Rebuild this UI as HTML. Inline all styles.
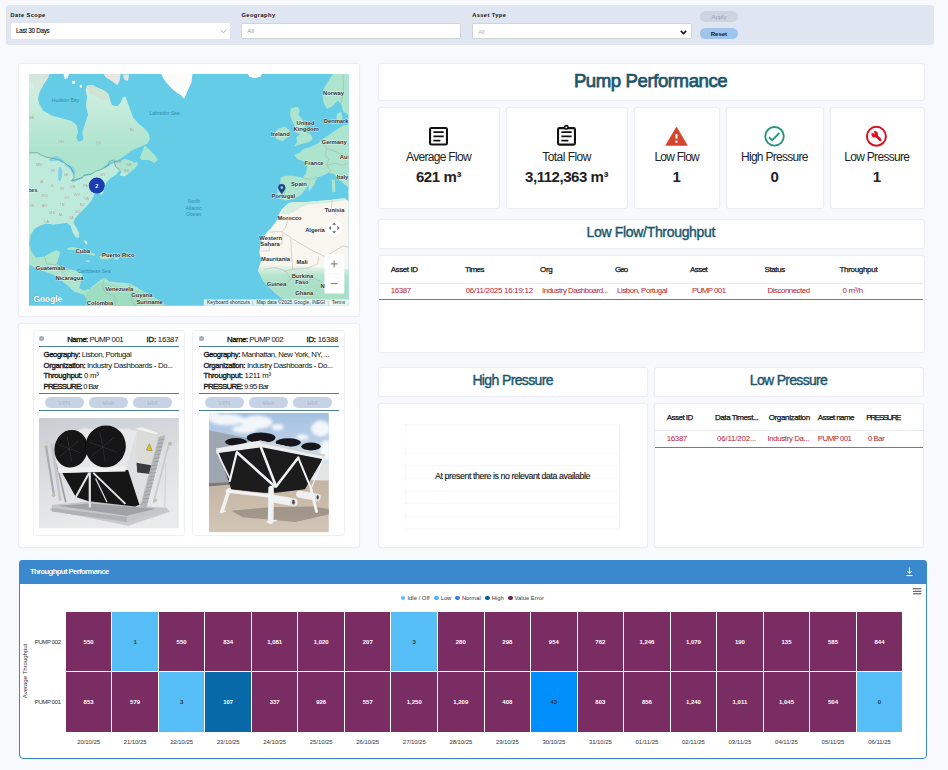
<!DOCTYPE html>
<html lang="en"><head><meta charset="utf-8"><title>Pump Performance</title>
<style>
html,body{margin:0;padding:0;}
body{width:948px;height:770px;overflow:hidden;background:#f8f9fd;font-family:"Liberation Sans",sans-serif;}
#root{position:relative;width:948px;height:770px;overflow:hidden;}
.p{position:absolute;background:#fff;border-radius:2.5px;box-shadow:0 0 0 1.2px #eceef4;box-sizing:border-box;}
.b{position:absolute;box-sizing:border-box;}
.t{position:absolute;white-space:pre;}
svg{position:absolute;overflow:visible;}
.t b{font-weight:400;-webkit-text-stroke:0.32px currentColor;}

</style></head>
<body>
<div id="root">
<div class="b" style="left:5.5px;top:5px;width:928.0px;height:39.5px;background:#dfe5f1;border-radius:3px;box-shadow:none;"></div>
<span class="t" style="left:10.60px;top:11.70px;font-size:5.7px;line-height:7.41px;color:#111;font-weight:700;letter-spacing:0.402px;">Date Scope</span>
<div class="b" style="left:10.6px;top:23.3px;width:219.4px;height:16.0px;background:#fff;border-radius:1.5px;"></div>
<span class="t" style="left:16.00px;top:27.01px;font-size:6.3px;line-height:8.19px;color:#000;letter-spacing:-0.280px;-webkit-text-stroke:0.08px #000;">Last 30 Days</span>
<svg style="left:219.5px;top:28.5px" width="7" height="5" viewBox="0 0 7 5"><path d="M0.8 0.9 L3.5 3.8 L6.2 0.9" fill="none" stroke="#9a9a9a" stroke-width="0.8"/></svg>
<span class="t" style="left:241.40px;top:11.70px;font-size:5.7px;line-height:7.41px;color:#111;font-weight:700;letter-spacing:0.463px;">Geography</span>
<div class="b" style="left:241.4px;top:23.3px;width:219.8px;height:16.2px;background:#fff;border:1px solid #cfd3da;border-radius:1.5px;"></div>
<span class="t" style="left:247.20px;top:28.10px;font-size:6px;line-height:7.8px;color:#9a9a9a;letter-spacing:0.043px;">All</span>
<span class="t" style="left:472.20px;top:11.70px;font-size:5.7px;line-height:7.41px;color:#111;font-weight:700;letter-spacing:0.416px;">Asset Type</span>
<div class="b" style="left:472.2px;top:23.3px;width:220.3px;height:16.2px;background:#fff;border:1px solid #cfd3da;border-radius:1.5px;"></div>
<span class="t" style="left:478.20px;top:28.60px;font-size:6px;line-height:7.8px;color:#b5b5b5;letter-spacing:-0.091px;">All</span>
<svg style="left:679.5px;top:29.5px" width="7" height="5" viewBox="0 0 7 5"><path d="M0.8 0.9 L3.5 3.6 L6.2 0.9" fill="none" stroke="#111" stroke-width="1.5"/></svg>
<div class="b" style="left:700px;top:11.4px;width:37.6px;height:10.4px;background:#ccd4e0;border-radius:6px;"></div>
<span class="t" style="left:711.39px;top:13.70px;font-size:6px;line-height:7.8px;color:#9aa4b2;">Apply</span>
<div class="b" style="left:700px;top:28px;width:37.6px;height:10.9px;background:#9fc5ec;border-radius:6px;"></div>
<span class="t" style="left:710.73px;top:30.50px;font-size:6px;line-height:7.8px;color:#0a1730;font-weight:700;">Reset</span>
<div class="p" style="left:19.3px;top:63.8px;width:339.7px;height:252.2px;"></div>
<svg style="left:29px;top:74px" width="319.6" height="231.7" viewBox="29 74 319.6 231.7">
<defs><clipPath id="mc"><rect x="29" y="74" width="319.6" height="231.7"/></clipPath><filter id="bl" x="-5%" y="-5%" width="110%" height="110%"><feGaussianBlur stdDeviation="0.5"/></filter></defs>
<g clip-path="url(#mc)">
<rect x="29" y="74" width="320" height="232" fill="#64cce7"/>
<g filter="url(#bl)">
<path d="M26.8 71.8 L50.1 71.8 L48.0 78.1 L42.9 85.2 L39.3 92.4 L37.9 99.6 L39.7 105.0 L42.9 110.4 L51.9 115.7 L62.7 118.4 L71.6 121.1 L77.0 125.6 L77.9 132.8 L76.1 137.3 L78.8 142.1 L83.3 139.6 L82.4 131.9 L85.1 123.8 L88.1 114.8 L86.0 105.9 L87.2 96.9 L85.6 89.7 L86.9 85.8 L92.3 84.9 L96.7 87.6 L103.9 90.3 L108.4 94.2 L110.2 100.5 L112.0 105.2 L117.4 106.2 L120.9 102.6 L122.7 97.8 L125.4 96.5 L128.1 104.1 L130.8 111.2 L133.0 117.5 L138.0 122.9 L144.3 128.3 L148.7 133.7 L150.0 139.0 L147.3 143.5 L141.6 146.2 L136.2 148.4 L129.9 151.6 L125.1 155.7 L122.7 158.2 L128.1 159.7 L132.6 161.5 L136.5 164.2 L134.8 168.6 L129.9 172.6 L124.5 176.2 L120.1 175.5 L121.8 170.8 L119.2 170.4 L115.6 174.9 L111.1 177.6 L107.1 181.2 L104.8 185.7 L103.6 192.0 L101.2 195.5 L97.6 186.8 L94.0 194.9 L91.0 201.1 L86.3 206.5 L82.4 210.5 L78.3 214.6 L74.9 218.2 L73.1 222.7 L76.5 228.0 L79.2 233.4 L78.3 238.3 L75.6 237.4 L72.7 232.0 L70.7 225.7 L67.1 222.7 L60.9 223.6 L53.7 224.5 L46.5 223.6 L39.3 225.7 L34.0 229.3 L30.7 235.6 L29.3 244.2 L31.3 251.4 L35.8 257.6 L44.7 256.4 L50.5 252.8 L56.7 250.1 L60.3 252.3 L58.5 258.5 L56.7 263.9 L60.9 266.6 L69.8 269.3 L78.8 271.6 L82.7 274.7 L81.0 281.8 L79.2 288.1 L84.2 290.8 L88.1 288.7 L91.7 290.8 L89.9 288.1 L94.9 284.5 L100.3 280.1 L104.8 277.9 L109.3 281.5 L118.3 282.4 L129.0 283.3 L136.2 286.9 L143.4 291.3 L150.5 294.9 L157.7 299.4 L164.0 303.4 L166.7 308.7 L86.0 308.7 L86.9 299.8 L84.2 294.8 L78.8 293.0 L73.4 291.2 L68.0 285.8 L60.9 280.4 L53.7 275.0 L44.7 271.4 L35.8 267.9 L26.8 263.9 Z" fill="#ade4ce" />
<clipPath id="nac"><path d="M26.8 71.8 L50.1 71.8 L48.0 78.1 L42.9 85.2 L39.3 92.4 L37.9 99.6 L39.7 105.0 L42.9 110.4 L51.9 115.7 L62.7 118.4 L71.6 121.1 L77.0 125.6 L77.9 132.8 L76.1 137.3 L78.8 142.1 L83.3 139.6 L82.4 131.9 L85.1 123.8 L88.1 114.8 L86.0 105.9 L87.2 96.9 L85.6 89.7 L86.9 85.8 L92.3 84.9 L96.7 87.6 L103.9 90.3 L108.4 94.2 L110.2 100.5 L112.0 105.2 L117.4 106.2 L120.9 102.6 L122.7 97.8 L125.4 96.5 L128.1 104.1 L130.8 111.2 L133.0 117.5 L138.0 122.9 L144.3 128.3 L148.7 133.7 L150.0 139.0 L147.3 143.5 L141.6 146.2 L136.2 148.4 L129.9 151.6 L125.1 155.7 L122.7 158.2 L128.1 159.7 L132.6 161.5 L136.5 164.2 L134.8 168.6 L129.9 172.6 L124.5 176.2 L120.1 175.5 L121.8 170.8 L119.2 170.4 L115.6 174.9 L111.1 177.6 L107.1 181.2 L104.8 185.7 L103.6 192.0 L101.2 195.5 L97.6 186.8 L94.0 194.9 L91.0 201.1 L86.3 206.5 L82.4 210.5 L78.3 214.6 L74.9 218.2 L73.1 222.7 L76.5 228.0 L79.2 233.4 L78.3 238.3 L75.6 237.4 L72.7 232.0 L70.7 225.7 L67.1 222.7 L60.9 223.6 L53.7 224.5 L46.5 223.6 L39.3 225.7 L34.0 229.3 L30.7 235.6 L29.3 244.2 L31.3 251.4 L35.8 257.6 L44.7 256.4 L50.5 252.8 L56.7 250.1 L60.3 252.3 L58.5 258.5 L56.7 263.9 L60.9 266.6 L69.8 269.3 L78.8 271.6 L82.7 274.7 L81.0 281.8 L79.2 288.1 L84.2 290.8 L88.1 288.7 L91.7 290.8 L89.9 288.1 L94.9 284.5 L100.3 280.1 L104.8 277.9 L109.3 281.5 L118.3 282.4 L129.0 283.3 L136.2 286.9 L143.4 291.3 L150.5 294.9 L157.7 299.4 L164.0 303.4 L166.7 308.7 L86.0 308.7 L86.9 299.8 L84.2 294.8 L78.8 293.0 L73.4 291.2 L68.0 285.8 L60.9 280.4 L53.7 275.0 L44.7 271.4 L35.8 267.9 L26.8 263.9 Z" fill="#000" /></clipPath>
<g clip-path="url(#nac)"><path d="M26.9 153.1 L37.3 152.6 L40.4 154.7 L46.7 157.3 L53.9 158.5 L60.2 160.4 L64.8 163.0 L70.6 167.1 L73.7 172.9 L74.2 177.5 L71.6 180.6 L77.8 179.1 L83.0 177.2 L83.5 175.5 L91.3 174.1 L95.5 171.3 L101.7 169.2 L108.0 165.6 L109.3 161.5 L113.8 159.7 L115.6 166.8 L120.1 170.4 L125.4 170.4 L150.5 195.5 L26.8 195.5 L26.8 186.8 L150.5 186.8 L150.5 238.8 L84.2 240.6 L60.9 228.0 L46.5 227.1 L35.8 229.8 L30.4 233.4 L26.8 235.2 L20 200 L20 150 Z" fill="#bdeadb" /></g>
<linearGradient id="ng" gradientUnits="userSpaceOnUse" x1="0" y1="74" x2="0" y2="150"><stop offset="0" stop-color="#e6f5ee" stop-opacity="0.75"/><stop offset="1" stop-color="#e6f5ee" stop-opacity="0"/></linearGradient>
<g clip-path="url(#nac)"><rect x="29" y="74" width="200" height="80" fill="url(#ng)"/></g>
<g clip-path="url(#nac)"><path d="M86.0 292.6 L100.3 281.8 L118.3 285.4 L139.8 290.8 L166.7 301.6 L166.7 310.5 L84.2 310.5 Z" fill="#9fddc0" /></g>
<path d="M26.8 71.8 L50.1 71.8 L48.0 78.1 L42.9 85.2 L39.3 92.4 L35.8 89.7 L32.2 82.6 L26.8 80.8 Z" fill="#d5e6dc" />
<path d="M86.9 85.8 L92.3 84.9 L96.7 87.6 L103.9 90.3 L108.4 94.2 L109.3 99.6 L102.1 100.5 L96.7 96.9 L89.6 93.3 Z" fill="#cfe3d2" />
<path d="M63.6 73.9 L68.9 73.9 L67.7 78.1 L64.8 79.0 Z" fill="#fbfbfa" />
<path d="M72.0 81.1 L74.9 80.8 L75.2 83.5 L72.5 84.0 Z" fill="#fbfbfa" />
<path d="M79.7 85.2 L82.0 84.9 L82.0 87.6 L79.9 87.6 Z" fill="#fbfbfa" />
<path d="M102.1 71.8 L120.9 71.8 L119.7 80.8 L117.4 85.2 L113.8 82.6 L110.2 79.9 L105.7 77.2 Z" fill="#e8e6e0" />
<path d="M122.7 74.5 L129.0 74.5 L128.1 80.8 L124.5 79.9 Z" fill="#e8e6e0" />
<path d="M160.4 71.8 L192.7 71.8 L191.4 82.6 L187.3 91.5 L184.1 99.1 L181.4 95.5 L176.9 92.8 L171.5 88.3 L166.7 82.9 L162.7 77.5 Z" fill="#fbfbfa" />
<path d="M139.8 157.9 L144.8 145.3 L148.7 148.9 L154.1 154.3 L158.1 159.7 L154.5 162.7 L148.7 160.0 L141.9 160.0 Z" fill="#ade4ce" />
<path d="M125.4 167.7 L132.6 163.3 L137.1 161.8 L138.0 165.1 L132.6 169.5 L126.3 173.1 L122.7 173.1 Z" fill="#ade4ce" />
<path d="M48.2 159.9 L52.9 157.3 L57.1 155.7 L60.2 157.8 L63.3 160.4 L64.8 162.5 L62.2 163.0 L59.1 160.9 L55.5 160.4 L51.3 161.4 Z" fill="#7fd3ea" />
<path d="M58.6 167.7 L60.7 166.6 L62.2 170.8 L62.0 177.0 L60.2 181.2 L58.3 179.6 L58.1 172.9 Z" fill="#7fd3ea" />
<path d="M64.3 163.5 L68.5 164.5 L72.6 167.1 L75.2 170.8 L74.7 174.4 L72.1 173.4 L70.6 169.7 L67.4 167.1 L64.8 165.6 Z" fill="#7fd3ea" />
<path d="M71.6 180.6 L75.8 179.1 L80.9 177.5 L83.5 176.5 L83.0 178.1 L78.9 180.1 L74.7 181.7 L72.1 182.2 Z" fill="#7fd3ea" />
<path d="M83.0 174.9 L87.2 173.7 L91.3 173.4 L91.3 174.7 L87.2 175.8 L83.5 176.2 Z" fill="#7fd3ea" />
<path d="M125.1 155.7 L118.3 159.7 L111.1 161.8 L103.9 166.8 L104.8 168.3 L112.0 163.6 L119.2 161.5 L125.4 158.2 Z" fill="#64cce7" />
<path d="M67.1 248.1 L73.4 246.9 L80.6 248.7 L87.8 251.4 L95.3 254.0 L94.2 256.0 L87.8 254.2 L80.6 251.5 L73.4 250.1 L68.0 249.7 Z" fill="#ade4ce" />
<path d="M99.4 256.0 L109.3 255.7 L111.4 258.5 L105.7 259.6 L100.3 259.1 Z" fill="#ade4ce" />
<path d="M114.3 257.8 L118.6 257.8 L118.6 259.6 L114.3 259.6 Z" fill="#ade4ce" />
<path d="M85.6 260.3 L89.9 260.5 L89.6 262.1 L86.0 261.9 Z" fill="#ade4ce" />
<path d="M83.8 240.2 L86.7 241.0 L87.4 244.5 L85.3 243.8 Z" fill="#d8efe6" />
<path d="M246.9 71.8 L263.0 71.8 L260.7 76.8 L254.0 78.2 L249.2 76.5 Z" fill="#fbfbfa" />
<path d="M334.2 71.8 L351.8 71.8 L351.8 115.7 L348.6 115.2 L343.2 111.6 L341.4 104.4 L337.8 100.8 L332.4 106.2 L327.0 108.9 L323.5 102.6 L322.4 95.1 L324.2 87.9 L328.5 80.8 Z" fill="#ade4ce" />
<path d="M337.1 113.4 L341.4 112.1 L342.5 118.8 L339.2 122.4 L336.4 118.4 Z" fill="#ade4ce" />
<path d="M290.8 108.6 L297.4 106.8 L300.1 110.4 L298.3 114.8 L301.9 118.8 L304.8 124.7 L304.1 131.0 L310.9 134.6 L312.7 139.2 L309.1 142.1 L301.6 143.9 L294.0 146.6 L297.3 141.7 L296.2 137.4 L300.0 134.6 L295.5 131.9 L294.6 125.6 L291.9 120.2 L289.9 113.9 Z" fill="#ade4ce" />
<path d="M277.4 129.2 L284.5 126.5 L289.4 130.1 L288.5 136.4 L282.7 141.0 L276.5 139.2 L274.7 133.7 Z" fill="#ade4ce" />
<path d="M351.8 123.8 L343.2 125.6 L337.4 129.2 L332.1 132.8 L326.7 136.4 L321.3 139.9 L317.7 143.5 L310.5 147.1 L303.4 148.9 L299.8 152.5 L294.0 155.2 L297.1 158.8 L303.4 161.5 L307.3 166.8 L305.5 174.0 L302.5 177.6 L292.6 175.8 L285.4 175.8 L280.6 177.6 L280.1 184.8 L278.6 193.7 L278.3 185.0 L277.2 192.2 L279.2 198.6 L285.4 200.4 L292.6 199.3 L299.8 195.8 L304.6 190.4 L308.7 185.0 L308.7 192.0 L314.1 184.8 L317.2 177.6 L323.1 175.5 L328.5 173.1 L333.9 174.0 L339.2 179.4 L344.6 184.8 L351.8 189.3 Z" fill="#ade4ce" />
<path d="M331.7 179.4 L334.9 179.8 L335.3 192.0 L332.4 192.3 Z" fill="#ade4ce" />
<path d="M288.5 202.9 L296.2 202.0 L307.0 202.0 L317.7 201.1 L328.5 200.2 L337.4 199.0 L345.0 198.3 L351.8 204.7 L351.8 310.5 L326.7 310.5 L324.9 299.8 L317.7 300.7 L307.0 302.5 L296.2 303.4 L289.0 301.6 L281.8 298.0 L274.7 292.6 L269.3 287.2 L263.9 281.8 L261.2 276.5 L258.2 271.1 L259.4 265.7 L261.4 260.3 L259.4 253.1 L260.3 246.0 L262.1 238.8 L265.7 233.4 L271.1 228.0 L276.5 220.9 L278.3 215.5 L281.8 209.2 Z" fill="#f8f6ef" />
<linearGradient id="sg" gradientUnits="userSpaceOnUse" x1="0" y1="264" x2="0" y2="284"><stop offset="0" stop-color="#b7e6cf" stop-opacity="0"/><stop offset="0.55" stop-color="#b7e6cf" stop-opacity="1"/><stop offset="1" stop-color="#a9e0c6"/></linearGradient>
<clipPath id="afc"><path d="M288.5 202.9 L296.2 202.0 L307.0 202.0 L317.7 201.1 L328.5 200.2 L337.4 199.0 L345.0 198.3 L351.8 204.7 L351.8 310.5 L326.7 310.5 L324.9 299.8 L317.7 300.7 L307.0 302.5 L296.2 303.4 L289.0 301.6 L281.8 298.0 L274.7 292.6 L269.3 287.2 L263.9 281.8 L261.2 276.5 L258.2 271.1 L259.4 265.7 L261.4 260.3 L259.4 253.1 L260.3 246.0 L262.1 238.8 L265.7 233.4 L271.1 228.0 L276.5 220.9 L278.3 215.5 L281.8 209.2 Z" fill="#000" /></clipPath>
<g clip-path="url(#afc)"><path d="M253.1 263.9 L351.8 269.3 L351.8 310.5 L253.1 310.5 Z" fill="url(#sg)" /></g>
<path d="M288.5 202.9 L296.2 202.0 L307.0 202.0 L317.7 201.1 L328.5 200.2 L337.4 199.0 L345.0 198.3 L346.4 200.2 L337.4 201.5 L328.5 202.6 L317.7 203.7 L308.7 204.4 L301.6 206.9 L294.4 211.9 L288.1 214.6 L280.9 213.7 L282.7 209.2 Z" fill="#d6eedd" />
</g>
<path d="M26.9 153.1 L37.3 152.6 L40.4 154.7 L46.7 157.3 L53.9 158.5 L60.2 160.4 L64.8 163.0 L70.6 167.1 L73.7 172.9 L74.2 177.5 L71.6 180.6 L77.8 179.1 L83.0 177.2 L83.5 175.5 L91.3 174.1 L95.5 171.3 L101.7 169.2 L108.0 165.6 L109.3 161.5 L113.8 159.7 L115.6 166.8 L120.1 170.4" fill="none" stroke="#5f9a90" stroke-width="0.7" fill="none"/>
<path d="M288.1 219.1 L285.4 228.0 L281.8 231.6 L269.3 232.0" fill="none" stroke="#9aa39a" stroke-width="0.5" fill="none" opacity="0.8"/>
<path d="M281.8 231.6 L292.6 238.8 L310.5 249.6 L324.9 256.7 L342.8 246.0 L348.6 246.9" fill="none" stroke="#9aa39a" stroke-width="0.5" fill="none" opacity="0.8"/>
<path d="M261.2 251.0 L269.3 251.0 L269.3 244.2 L281.8 244.2 L282.7 233.4" fill="none" stroke="#9aa39a" stroke-width="0.5" fill="none" opacity="0.8"/>
<path d="M290.8 238.8 L291.7 256.7 L292.6 269.3 L285.4 271.1" fill="none" stroke="#9aa39a" stroke-width="0.5" fill="none" opacity="0.8"/>
<path d="M292.6 269.3 L307.0 268.4 L317.7 263.9 L318.6 256.7" fill="none" stroke="#9aa39a" stroke-width="0.5" fill="none" opacity="0.8"/>
<path d="M332.1 200.2 L331.2 208.3 L337.4 215.5" fill="none" stroke="#9aa39a" stroke-width="0.5" fill="none" opacity="0.8"/>
<path d="M263.9 269.3 L274.7 267.5 L285.4 271.1 L290.8 278.3 L285.4 285.4" fill="none" stroke="#9aa39a" stroke-width="0.5" fill="none" opacity="0.8"/>
<path d="M290.8 278.3 L303.4 281.8 L314.1 278.3 L321.3 281.8" fill="none" stroke="#9aa39a" stroke-width="0.5" fill="none" opacity="0.8"/>
<path d="M302.5 177.6 L310.5 179.4 L317.2 177.6" fill="none" stroke="#9aa39a" stroke-width="0.5" fill="none" opacity="0.8"/>
<path d="M285.4 188.6 L284.5 195.8 L281.8 199.0" fill="none" stroke="#9aa39a" stroke-width="0.5" fill="none" opacity="0.8"/>
<path d="M321.3 139.9 L324.0 145.3 L326.7 148.9 L324.9 154.3 L328.5 159.7 L326.7 165.1 L330.3 170.4 L328.5 173.1" fill="none" stroke="#9aa39a" stroke-width="0.5" fill="none" opacity="0.8"/>
<path d="M326.7 148.9 L333.9 150.7 L341.0 154.3 L348.6 156.1" fill="none" stroke="#9aa39a" stroke-width="0.5" fill="none" opacity="0.8"/>
<path d="M326.7 165.1 L335.6 163.3 L342.8 165.1 L348.6 163.3" fill="none" stroke="#9aa39a" stroke-width="0.5" fill="none" opacity="0.8"/>
<path d="M342.8 74.5 L343.7 87.9 L341.0 104.1" fill="none" stroke="#9aa39a" stroke-width="0.5" fill="none" opacity="0.8"/>
<path d="M104.8 278.3 L102.1 285.4 L105.7 292.6 L114.7 296.2 L115.6 305.5" fill="none" stroke="#9aa39a" stroke-width="0.5" fill="none" opacity="0.8"/>
<path d="M129.0 283.6 L132.6 290.8 L130.8 299.8 L136.2 305.5" fill="none" stroke="#9aa39a" stroke-width="0.5" fill="none" opacity="0.8"/>
<path d="M143.4 291.7 L145.2 299.8 L148.7 305.5" fill="none" stroke="#9aa39a" stroke-width="0.5" fill="none" opacity="0.8"/>
<path d="M44.7 256.7 L46.5 263.9 L55.5 264.8 L56.4 263.9" fill="none" stroke="#9aa39a" stroke-width="0.5" fill="none" opacity="0.8"/>
<path d="M55.5 264.8 L60.9 271.1 L69.8 269.3" fill="none" stroke="#9aa39a" stroke-width="0.5" fill="none" opacity="0.8"/>
<path d="M60.9 271.1 L68.0 278.3 L81.0 281.8" fill="none" stroke="#9aa39a" stroke-width="0.5" fill="none" opacity="0.8"/>
<circle cx="334.2" cy="228" r="8.2" fill="#fff"/>
<g fill="#666"><path d="M334.2 222.6 l2 2.2 h-4 z"/><path d="M334.2 233.4 l2 -2.2 h-4 z"/><path d="M328.8 228 l2.2 -2 v4 z"/><path d="M339.6 228 l-2.2 -2 v4 z"/></g>
<rect x="324.5" y="254" width="19.8" height="39.5" rx="1.5" fill="#fff"/>
<path d="M330.8 263.9 H337.6 M334.2 260.5 V267.3 M330.8 283.6 H337.6" stroke="#666" stroke-width="0.9" fill="none"/>
<rect x="328.5" y="273.6" width="11.8" height="0.4" fill="#e6e6e6"/>
<rect x="203.8" y="299.4" width="146" height="7" fill="#fff" opacity="0.75"/>
<g font-family="Liberation Sans, sans-serif" font-size="5" fill="#333">
<text x="206.9" y="304.3" textLength="43" lengthAdjust="spacingAndGlyphs">Keyboard shortcuts</text>
<text x="256.4" y="304.3" textLength="68.8" lengthAdjust="spacingAndGlyphs">Map data ©2025 Google, INEGI</text>
<text x="331.7" y="304.3" textLength="13.5" lengthAdjust="spacingAndGlyphs">Terms</text>
</g>
<path d="M252.8 300.5 V305 M328.3 300.5 V305" stroke="#999" stroke-width="0.4"/>
<text x="33.6" y="302" font-family="Liberation Sans, sans-serif" font-size="9.5" font-weight="700" fill="#fff" stroke="#7a8a8a" stroke-width="0.5" paint-order="stroke" textLength="28.5" lengthAdjust="spacingAndGlyphs">Google</text>
<text x="333.5" y="94.9" text-anchor="middle" font-family="Liberation Sans, sans-serif" font-size="5.8" font-weight="700" fill="#303030" stroke="#fff" stroke-width="0.8" paint-order="stroke" stroke-opacity="0.7">Norway</text>
<text x="336.2" y="122.9" text-anchor="middle" font-family="Liberation Sans, sans-serif" font-size="5.8" font-weight="700" fill="#303030" stroke="#fff" stroke-width="0.8" paint-order="stroke" stroke-opacity="0.7">Denmark</text>
<text x="305.5" y="125.4" text-anchor="middle" font-family="Liberation Sans, sans-serif" font-size="5.8" font-weight="700" fill="#303030" stroke="#fff" stroke-width="0.8" paint-order="stroke" stroke-opacity="0.7">United</text>
<text x="306.1" y="130.9" text-anchor="middle" font-family="Liberation Sans, sans-serif" font-size="5.8" font-weight="700" fill="#303030" stroke="#fff" stroke-width="0.8" paint-order="stroke" stroke-opacity="0.7">Kingdom</text>
<text x="280.4" y="136.3" text-anchor="middle" font-family="Liberation Sans, sans-serif" font-size="5.8" font-weight="700" fill="#303030" stroke="#fff" stroke-width="0.8" paint-order="stroke" stroke-opacity="0.7">Ireland</text>
<text x="334.2" y="143.8" text-anchor="middle" font-family="Liberation Sans, sans-serif" font-size="5.8" font-weight="700" fill="#303030" stroke="#fff" stroke-width="0.8" paint-order="stroke" stroke-opacity="0.7">Germany</text>
<text x="314.1" y="165.4" text-anchor="middle" font-family="Liberation Sans, sans-serif" font-size="5.8" font-weight="700" fill="#303030" stroke="#fff" stroke-width="0.8" paint-order="stroke" stroke-opacity="0.7">France</text>
<text x="298.9" y="186.5" text-anchor="middle" font-family="Liberation Sans, sans-serif" font-size="5.8" font-weight="700" fill="#303030" stroke="#fff" stroke-width="0.8" paint-order="stroke" stroke-opacity="0.7">Spain</text>
<text x="342.5" y="178.6" text-anchor="middle" font-family="Liberation Sans, sans-serif" font-size="5.8" font-weight="700" fill="#303030" stroke="#fff" stroke-width="0.8" paint-order="stroke" stroke-opacity="0.7">Italy</text>
<text x="345.2" y="158.9" text-anchor="middle" font-family="Liberation Sans, sans-serif" font-size="5.8" font-weight="700" fill="#303030" stroke="#fff" stroke-width="0.8" paint-order="stroke" stroke-opacity="0.7">Aus</text>
<text x="283.3" y="198.2" text-anchor="middle" font-family="Liberation Sans, sans-serif" font-size="5.8" font-weight="700" fill="#303030" stroke="#fff" stroke-width="0.8" paint-order="stroke" stroke-opacity="0.7">Portugal</text>
<text x="289.6" y="219.7" text-anchor="middle" font-family="Liberation Sans, sans-serif" font-size="5.8" font-weight="700" fill="#303030" stroke="#fff" stroke-width="0.8" paint-order="stroke" stroke-opacity="0.7">Morocco</text>
<text x="334.7" y="211.8" text-anchor="middle" font-family="Liberation Sans, sans-serif" font-size="5.8" font-weight="700" fill="#303030" stroke="#fff" stroke-width="0.8" paint-order="stroke" stroke-opacity="0.7">Tunisia</text>
<text x="315.0" y="231.9" text-anchor="middle" font-family="Liberation Sans, sans-serif" font-size="5.8" font-weight="700" fill="#303030" stroke="#fff" stroke-width="0.8" paint-order="stroke" stroke-opacity="0.7">Algeria</text>
<text x="270.7" y="240.2" text-anchor="middle" font-family="Liberation Sans, sans-serif" font-size="5.8" font-weight="700" fill="#303030" stroke="#fff" stroke-width="0.8" paint-order="stroke" stroke-opacity="0.7">Western</text>
<text x="270.0" y="245.9" text-anchor="middle" font-family="Liberation Sans, sans-serif" font-size="5.8" font-weight="700" fill="#303030" stroke="#fff" stroke-width="0.8" paint-order="stroke" stroke-opacity="0.7">Sahara</text>
<text x="275.6" y="260.6" text-anchor="middle" font-family="Liberation Sans, sans-serif" font-size="5.8" font-weight="700" fill="#303030" stroke="#fff" stroke-width="0.8" paint-order="stroke" stroke-opacity="0.7">Mauritania</text>
<text x="302.1" y="264.2" text-anchor="middle" font-family="Liberation Sans, sans-serif" font-size="5.8" font-weight="700" fill="#303030" stroke="#fff" stroke-width="0.8" paint-order="stroke" stroke-opacity="0.7">Mali</text>
<text x="302.5" y="277.7" text-anchor="middle" font-family="Liberation Sans, sans-serif" font-size="5.8" font-weight="700" fill="#303030" stroke="#fff" stroke-width="0.8" paint-order="stroke" stroke-opacity="0.7">Burkina</text>
<text x="301.9" y="283.6" text-anchor="middle" font-family="Liberation Sans, sans-serif" font-size="5.8" font-weight="700" fill="#303030" stroke="#fff" stroke-width="0.8" paint-order="stroke" stroke-opacity="0.7">Faso</text>
<text x="276.5" y="285.7" text-anchor="middle" font-family="Liberation Sans, sans-serif" font-size="5.8" font-weight="700" fill="#303030" stroke="#fff" stroke-width="0.8" paint-order="stroke" stroke-opacity="0.7">Guinea</text>
<text x="304.3" y="294.7" text-anchor="middle" font-family="Liberation Sans, sans-serif" font-size="5.8" font-weight="700" fill="#303030" stroke="#fff" stroke-width="0.8" paint-order="stroke" stroke-opacity="0.7">Ghana</text>
<text x="322.7" y="287.9" text-anchor="middle" font-family="Liberation Sans, sans-serif" font-size="5.8" font-weight="700" fill="#303030" stroke="#fff" stroke-width="0.8" paint-order="stroke" stroke-opacity="0.7">N</text>
<text x="82.7" y="252.6" text-anchor="middle" font-family="Liberation Sans, sans-serif" font-size="5.8" font-weight="700" fill="#303030" stroke="#fff" stroke-width="0.8" paint-order="stroke" stroke-opacity="0.7">Cuba</text>
<text x="118.3" y="257.4" text-anchor="middle" font-family="Liberation Sans, sans-serif" font-size="5.8" font-weight="700" fill="#303030" stroke="#fff" stroke-width="0.8" paint-order="stroke" stroke-opacity="0.7">Puerto Rico</text>
<text x="50.5" y="269.6" text-anchor="middle" font-family="Liberation Sans, sans-serif" font-size="5.8" font-weight="700" fill="#303030" stroke="#fff" stroke-width="0.8" paint-order="stroke" stroke-opacity="0.7">Guatemala</text>
<text x="69.5" y="279.8" text-anchor="middle" font-family="Liberation Sans, sans-serif" font-size="5.8" font-weight="700" fill="#303030" stroke="#fff" stroke-width="0.8" paint-order="stroke" stroke-opacity="0.7">Nicaragua</text>
<text x="119.2" y="290.6" text-anchor="middle" font-family="Liberation Sans, sans-serif" font-size="5.8" font-weight="700" fill="#303030" stroke="#fff" stroke-width="0.8" paint-order="stroke" stroke-opacity="0.7">Venezuela</text>
<text x="141.9" y="296.9" text-anchor="middle" font-family="Liberation Sans, sans-serif" font-size="5.8" font-weight="700" fill="#303030" stroke="#fff" stroke-width="0.8" paint-order="stroke" stroke-opacity="0.7">Guyana</text>
<text x="149.6" y="304.0" text-anchor="middle" font-family="Liberation Sans, sans-serif" font-size="5.8" font-weight="700" fill="#303030" stroke="#fff" stroke-width="0.8" paint-order="stroke" stroke-opacity="0.7">Suriname</text>
<text x="100.0" y="304.6" text-anchor="middle" font-family="Liberation Sans, sans-serif" font-size="5.8" font-weight="700" fill="#303030" stroke="#fff" stroke-width="0.8" paint-order="stroke" stroke-opacity="0.7">Colombia</text>
<text x="33.2" y="191.8" text-anchor="middle" font-family="Liberation Sans, sans-serif" font-size="5.8" font-weight="700" fill="#303030" stroke="#fff" stroke-width="0.8" paint-order="stroke" stroke-opacity="0.7">tes</text>
<text x="65.4" y="102.3" text-anchor="middle" font-family="Liberation Sans, sans-serif" font-size="5" font-weight="400" fill="#2f8fb0" >Hudson Bay</text>
<text x="164.5" y="115.4" text-anchor="middle" font-family="Liberation Sans, sans-serif" font-size="5" font-weight="400" fill="#2f8fb0" >Labrador Sea</text>
<text x="194.0" y="203.3" text-anchor="middle" font-family="Liberation Sans, sans-serif" font-size="5" font-weight="400" fill="#2f8fb0" >North</text>
<text x="193.6" y="209.8" text-anchor="middle" font-family="Liberation Sans, sans-serif" font-size="5" font-weight="400" fill="#2f8fb0" >Atlantic</text>
<text x="193.6" y="215.9" text-anchor="middle" font-family="Liberation Sans, sans-serif" font-size="5" font-weight="400" fill="#2f8fb0" >Ocean</text>
<text x="94.0" y="273.4" text-anchor="middle" font-family="Liberation Sans, sans-serif" font-size="5" font-weight="400" fill="#2f8fb0" >Caribbean Sea</text>
<text x="38.9" y="166.4" text-anchor="middle" font-family="Liberation Sans, sans-serif" font-size="3.7" fill="#b58d8d" opacity="0.75">MN</text>
<text x="52.7" y="172.4" text-anchor="middle" font-family="Liberation Sans, sans-serif" font-size="3.7" fill="#b58d8d" opacity="0.75">WI</text>
<text x="66.2" y="175.7" text-anchor="middle" font-family="Liberation Sans, sans-serif" font-size="3.7" fill="#b58d8d" opacity="0.75">MI</text>
<text x="41.7" y="182.8" text-anchor="middle" font-family="Liberation Sans, sans-serif" font-size="3.7" fill="#b58d8d" opacity="0.75">IA</text>
<text x="52.7" y="187.1" text-anchor="middle" font-family="Liberation Sans, sans-serif" font-size="3.7" fill="#b58d8d" opacity="0.75">IL</text>
<text x="62" y="189.7" text-anchor="middle" font-family="Liberation Sans, sans-serif" font-size="3.7" fill="#b58d8d" opacity="0.75">IN</text>
<text x="72.6" y="188.2" text-anchor="middle" font-family="Liberation Sans, sans-serif" font-size="3.7" fill="#b58d8d" opacity="0.75">OH</text>
<text x="85.6" y="187.1" text-anchor="middle" font-family="Liberation Sans, sans-serif" font-size="3.7" fill="#b58d8d" opacity="0.75">PA</text>
<text x="102.8" y="175.9" text-anchor="middle" font-family="Liberation Sans, sans-serif" font-size="3.7" fill="#b58d8d" opacity="0.75">NY</text>
<text x="44.6" y="196.7" text-anchor="middle" font-family="Liberation Sans, sans-serif" font-size="3.7" fill="#b58d8d" opacity="0.75">MO</text>
<text x="66.9" y="198.9" text-anchor="middle" font-family="Liberation Sans, sans-serif" font-size="3.7" fill="#b58d8d" opacity="0.75">KY</text>
<text x="77" y="196.2" text-anchor="middle" font-family="Liberation Sans, sans-serif" font-size="3.7" fill="#b58d8d" opacity="0.75">WV</text>
<text x="86.7" y="199.8" text-anchor="middle" font-family="Liberation Sans, sans-serif" font-size="3.7" fill="#b58d8d" opacity="0.75">VA</text>
<text x="62" y="205.8" text-anchor="middle" font-family="Liberation Sans, sans-serif" font-size="3.7" fill="#b58d8d" opacity="0.75">TN</text>
<text x="82.5" y="206.4" text-anchor="middle" font-family="Liberation Sans, sans-serif" font-size="3.7" fill="#b58d8d" opacity="0.75">NC</text>
<text x="31.6" y="206.9" text-anchor="middle" font-family="Liberation Sans, sans-serif" font-size="3.7" fill="#b58d8d" opacity="0.75">OK</text>
<text x="44.4" y="207.4" text-anchor="middle" font-family="Liberation Sans, sans-serif" font-size="3.7" fill="#b58d8d" opacity="0.75">AR</text>
<text x="52.1" y="214.2" text-anchor="middle" font-family="Liberation Sans, sans-serif" font-size="3.7" fill="#b58d8d" opacity="0.75">MS</text>
<text x="60.7" y="216.2" text-anchor="middle" font-family="Liberation Sans, sans-serif" font-size="3.7" fill="#b58d8d" opacity="0.75">AL</text>
<text x="71.1" y="218.8" text-anchor="middle" font-family="Liberation Sans, sans-serif" font-size="3.7" fill="#b58d8d" opacity="0.75">GA</text>
<text x="77.8" y="213.3" text-anchor="middle" font-family="Liberation Sans, sans-serif" font-size="3.7" fill="#b58d8d" opacity="0.75">SC</text>
<text x="46.7" y="223.3" text-anchor="middle" font-family="Liberation Sans, sans-serif" font-size="3.7" fill="#b58d8d" opacity="0.75">LA</text>
<text x="119.2" y="163.1" text-anchor="middle" font-family="Liberation Sans, sans-serif" font-size="3.7" fill="#b58d8d" opacity="0.75">ME</text>
<text x="129" y="166.0" text-anchor="middle" font-family="Liberation Sans, sans-serif" font-size="3.7" fill="#b58d8d" opacity="0.75">NB</text>
<text x="126.3" y="172.1" text-anchor="middle" font-family="Liberation Sans, sans-serif" font-size="3.7" fill="#b58d8d" opacity="0.75">NS</text>
<text x="98.5" y="143.9" text-anchor="middle" font-family="Liberation Sans, sans-serif" font-size="3.7" fill="#b58d8d" opacity="0.75">QC</text>
<text x="60.9" y="143.0" text-anchor="middle" font-family="Liberation Sans, sans-serif" font-size="3.7" fill="#b58d8d" opacity="0.75">ON</text>
<text x="132.2" y="131.4" text-anchor="middle" font-family="Liberation Sans, sans-serif" font-size="3.7" fill="#b58d8d" opacity="0.75">NL</text>
<text x="31.5" y="119.3" text-anchor="middle" font-family="Liberation Sans, sans-serif" font-size="3.7" fill="#b58d8d" opacity="0.75">MB</text>
<circle cx="96.8" cy="185.6" r="8" fill="#1a3db0"/>
<text x="96.8" y="187.6" text-anchor="middle" font-family="Liberation Sans, sans-serif" font-size="5.5" font-weight="700" fill="#fff">2</text>
<path d="M281.8 194 C279.6 190.5 278.4 189.3 278.4 187.6 a3.4 3.4 0 0 1 6.8 0 C285.2 189.3 284 190.5 281.8 194 Z" fill="#17467f" stroke="#17467f" stroke-width="0.6"/><circle cx="281.8" cy="187.6" r="1.3" fill="#9fd0f0"/>
</g></svg>
<div class="p" style="left:19.3px;top:323.6px;width:339.7px;height:223.7px;"></div>
<div class="p" style="left:33.5px;top:331px;width:150.6px;height:204.3px;border-radius:3px;box-shadow:0 0 0 1px #eef0f4,0 1px 2px rgba(100,110,140,.07);"></div>
<div class="b" style="left:39.3px;top:336.3px;width:4.6px;height:4.6px;border-radius:50%;background:#a9aeb8"></div>
<span class="t" style="left:67.20px;top:334.93px;font-size:7.8px;line-height:10.14px;color:#111;letter-spacing:-0.479px;"><b>Name:</b> PUMP 001</span>
<span class="t" style="left:146.60px;top:334.93px;font-size:7.8px;line-height:10.14px;color:#111;letter-spacing:-0.236px;"><b>ID:</b> 16387</span>
<div class="b" style="left:39.1px;top:346.1px;width:139.6px;height:1px;background:#4b7f9b"></div>
<div class="b" style="left:39.1px;top:393.1px;width:139.6px;height:1px;background:#4b7f9b"></div>
<div class="b" style="left:39.1px;top:409.8px;width:139.6px;height:1px;background:#4b7f9b"></div>
<span class="t" style="left:43.50px;top:349.63px;font-size:7.8px;line-height:10.14px;color:#111;letter-spacing:-0.428px;"><b>Geography:</b> Lisbon, Portugal</span>
<span class="t" style="left:43.50px;top:360.83px;font-size:7.8px;line-height:10.14px;color:#111;letter-spacing:-0.361px;"><b>Organization:</b> Industry Dashboards - Do...</span>
<span class="t" style="left:43.50px;top:370.73px;font-size:7.8px;line-height:10.14px;color:#111;letter-spacing:-0.301px;"><b>Throughput:</b> 0 m³</span>
<span class="t" style="left:43.50px;top:381.63px;font-size:7.8px;line-height:10.14px;color:#111;letter-spacing:-0.758px;"><b>PRESSURE:</b> 0 Bar</span>
<div class="b" style="left:45.0px;top:396.5px;width:38.7px;height:11.4px;background:#c6d3e6;border-radius:6px;"></div>
<span class="t" style="left:58.59px;top:399.56px;font-size:5.6px;line-height:7.28px;color:#a3b3c8;">VPN</span>
<div class="b" style="left:89.0px;top:396.5px;width:39.0px;height:11.4px;background:#c6d3e6;border-radius:6px;"></div>
<span class="t" style="left:102.80px;top:399.56px;font-size:5.6px;line-height:7.28px;color:#a3b3c8;">Web</span>
<div class="b" style="left:133.1px;top:396.5px;width:39.1px;height:11.4px;background:#c6d3e6;border-radius:6px;"></div>
<span class="t" style="left:147.52px;top:399.56px;font-size:5.6px;line-height:7.28px;color:#a3b3c8;">HMI</span>
<div class="p" style="left:193.4px;top:331px;width:150.6px;height:204.3px;border-radius:3px;box-shadow:0 0 0 1px #eef0f4,0 1px 2px rgba(100,110,140,.07);"></div>
<div class="b" style="left:199.2px;top:336.3px;width:4.6px;height:4.6px;border-radius:50%;background:#a9aeb8"></div>
<span class="t" style="left:227.10px;top:334.93px;font-size:7.8px;line-height:10.14px;color:#111;letter-spacing:-0.479px;"><b>Name:</b> PUMP 002</span>
<span class="t" style="left:306.50px;top:334.93px;font-size:7.8px;line-height:10.14px;color:#111;letter-spacing:-0.236px;"><b>ID:</b> 16388</span>
<div class="b" style="left:199.0px;top:346.1px;width:139.6px;height:1px;background:#4b7f9b"></div>
<div class="b" style="left:199.0px;top:393.1px;width:139.6px;height:1px;background:#4b7f9b"></div>
<div class="b" style="left:199.0px;top:409.8px;width:139.6px;height:1px;background:#4b7f9b"></div>
<span class="t" style="left:203.40px;top:349.63px;font-size:7.8px;line-height:10.14px;color:#111;letter-spacing:-0.421px;"><b>Geography:</b> Manhattan, New York, NY, ...</span>
<span class="t" style="left:203.40px;top:360.83px;font-size:7.8px;line-height:10.14px;color:#111;letter-spacing:-0.361px;"><b>Organization:</b> Industry Dashboards - Do...</span>
<span class="t" style="left:203.40px;top:370.73px;font-size:7.8px;line-height:10.14px;color:#111;letter-spacing:-0.250px;"><b>Throughput:</b> 1211 m³</span>
<span class="t" style="left:203.40px;top:381.63px;font-size:7.8px;line-height:10.14px;color:#111;letter-spacing:-0.656px;"><b>PRESSURE:</b> 9.95 Bar</span>
<div class="b" style="left:204.9px;top:396.5px;width:38.7px;height:11.4px;background:#c6d3e6;border-radius:6px;"></div>
<span class="t" style="left:218.49px;top:399.56px;font-size:5.6px;line-height:7.28px;color:#a3b3c8;">VPN</span>
<div class="b" style="left:248.9px;top:396.5px;width:39.0px;height:11.4px;background:#c6d3e6;border-radius:6px;"></div>
<span class="t" style="left:262.70px;top:399.56px;font-size:5.6px;line-height:7.28px;color:#a3b3c8;">Web</span>
<div class="b" style="left:293.0px;top:396.5px;width:39.1px;height:11.4px;background:#c6d3e6;border-radius:6px;"></div>
<span class="t" style="left:307.42px;top:399.56px;font-size:5.6px;line-height:7.28px;color:#a3b3c8;">HMI</span>
<svg style="left:39.1px;top:418.1px" width="139.9" height="110.5" viewBox="39.1 418.1 139.9 110.5">
<defs><linearGradient id="g1" x1="0" y1="0" x2="0.3" y2="1"><stop offset="0" stop-color="#c9cdd2"/><stop offset="0.55" stop-color="#dcdee1"/><stop offset="1" stop-color="#e9eaec"/></linearGradient><clipPath id="c1"><rect x="39.1" y="418.1" width="139.9" height="110.5"/></clipPath><filter id="b1"><feGaussianBlur stdDeviation="0.35"/></filter></defs>
<g clip-path="url(#c1)"><rect x="39.1" y="418.1" width="139.9" height="110.5" fill="url(#g1)"/><g filter="url(#b1)">
<polygon points="49.3,510.2 128.1,525.9 170.2,511.9 166.7,507.5 126.4,517.2 51.9,507.5" fill="#bfc2c6" opacity="0.8"/>
<line x1="46.1" y1="446.2" x2="54.2" y2="496.1" stroke="#a9adb1" stroke-width="2.2"/>
<line x1="51.7" y1="443.9" x2="60.5" y2="501.0" stroke="#c3c6c9" stroke-width="2.4"/>
<line x1="56.6" y1="462.8" x2="65.9" y2="502.3" stroke="#9a9ea2" stroke-width="1.6"/>
<polygon points="51.9,504.9 90.5,501.7 166.7,508.0 166.3,511.9 126.7,521.5 51.9,511.0" fill="#c4c7ca"/>
<polygon points="58.0,505.8 90.5,503.5 156.2,508.8 126.7,515.8" fill="#9fa3a7"/>
<polygon points="51.9,508.0 126.7,517.2 126.7,522.1 51.9,511.6" fill="#aeb1b5"/>
<polygon points="56.3,439.2 82.6,428.7 128.1,428.7 137.3,431.3 126.0,470.2 58.9,471.2 56.3,462.8" fill="#e6e7e8"/>
<polygon points="62.4,473.0 128.1,470.2 132.5,464.6 143.9,503.1 135.2,506.6 88.7,501.4 75.9,497.0" fill="#161618"/>
<polygon points="128.1,469.8 136.9,431.3 142.2,464.6 150.9,466.3 142.2,503.1 139.5,504.9" fill="#dfe0e1"/>
<line x1="89.2" y1="473.0" x2="75.9" y2="497.0" stroke="#e4e5e6" stroke-width="2.0"/>
<line x1="89.9" y1="472.5" x2="89.9" y2="507.5" stroke="#e4e5e6" stroke-width="2.2"/>
<line x1="93.4" y1="473.0" x2="125.5" y2="504.0" stroke="#e4e5e6" stroke-width="2.0"/>
<line x1="95.7" y1="478.6" x2="107.1" y2="502.3" stroke="#e4e5e6" stroke-width="1.2"/>
<polygon points="58.0,468.1 126.0,466.7 125.5,471.6 58.9,473.0" fill="#f0f0f0"/>
<ellipse cx="71.2" cy="448.8" rx="16.6" ry="18.9" fill="#121214" transform="rotate(12 71.2 448.8)"/>
<ellipse cx="105.7" cy="446.5" rx="20.2" ry="21.0" fill="#121214" transform="rotate(12 105.7 446.5)"/>
<line x1="69.4" y1="448.8" x2="81.0" y2="453.0" stroke="#3a3a3e" stroke-width="0.7"/>
<line x1="69.4" y1="448.8" x2="71.6" y2="460.9" stroke="#3a3a3e" stroke-width="0.7"/>
<line x1="69.4" y1="448.8" x2="60.0" y2="456.7" stroke="#3a3a3e" stroke-width="0.7"/>
<line x1="69.4" y1="448.8" x2="57.9" y2="444.6" stroke="#3a3a3e" stroke-width="0.7"/>
<line x1="69.4" y1="448.8" x2="67.3" y2="436.7" stroke="#3a3a3e" stroke-width="0.7"/>
<line x1="69.4" y1="448.8" x2="78.8" y2="440.9" stroke="#3a3a3e" stroke-width="0.7"/>
<line x1="102.7" y1="447.1" x2="116.7" y2="452.2" stroke="#3a3a3e" stroke-width="0.7"/>
<line x1="102.7" y1="447.1" x2="105.3" y2="461.7" stroke="#3a3a3e" stroke-width="0.7"/>
<line x1="102.7" y1="447.1" x2="91.3" y2="456.6" stroke="#3a3a3e" stroke-width="0.7"/>
<line x1="102.7" y1="447.1" x2="88.7" y2="442.0" stroke="#3a3a3e" stroke-width="0.7"/>
<line x1="102.7" y1="447.1" x2="100.1" y2="432.4" stroke="#3a3a3e" stroke-width="0.7"/>
<line x1="102.7" y1="447.1" x2="114.1" y2="437.5" stroke="#3a3a3e" stroke-width="0.7"/>
<polygon points="137.3,429.5 156.5,434.4 155.5,464.9 135.5,461.4" fill="#dcdcd6"/>
<polygon points="135.2,428.7 142.2,427.4 157.9,433.0 156.5,434.4 137.3,429.5" fill="#f2f2ee"/>
<polygon points="149.5,443.9 152.3,450.9 146.4,450.2" fill="#e6c21c" stroke="#333" stroke-width="0.3"/>
<polygon points="136.6,462.8 152.7,465.5 150.9,474.2 137.3,472.5" fill="#3b3b3d"/>
<polygon points="158.8,437.4 165.3,435.1 146.5,508.4 140.1,507.5" fill="#b4b7ba"/>
<line x1="159.0" y1="440.1" x2="164.6" y2="439.3" stroke="#7d8084" stroke-width="0.45"/>
<line x1="158.0" y1="443.7" x2="163.6" y2="443.0" stroke="#7d8084" stroke-width="0.45"/>
<line x1="157.1" y1="447.4" x2="162.7" y2="446.7" stroke="#7d8084" stroke-width="0.45"/>
<line x1="156.1" y1="451.1" x2="161.7" y2="450.4" stroke="#7d8084" stroke-width="0.45"/>
<line x1="155.1" y1="454.8" x2="160.7" y2="454.1" stroke="#7d8084" stroke-width="0.45"/>
<line x1="154.2" y1="458.5" x2="159.8" y2="457.8" stroke="#7d8084" stroke-width="0.45"/>
<line x1="153.2" y1="462.1" x2="158.8" y2="461.4" stroke="#7d8084" stroke-width="0.45"/>
<line x1="152.2" y1="465.8" x2="157.8" y2="465.1" stroke="#7d8084" stroke-width="0.45"/>
<line x1="151.3" y1="469.5" x2="156.9" y2="468.8" stroke="#7d8084" stroke-width="0.45"/>
<line x1="150.3" y1="473.2" x2="155.9" y2="472.5" stroke="#7d8084" stroke-width="0.45"/>
<line x1="149.3" y1="476.9" x2="155.0" y2="476.2" stroke="#7d8084" stroke-width="0.45"/>
<line x1="148.4" y1="480.5" x2="154.0" y2="479.8" stroke="#7d8084" stroke-width="0.45"/>
<line x1="147.4" y1="484.2" x2="153.0" y2="483.5" stroke="#7d8084" stroke-width="0.45"/>
<line x1="146.5" y1="487.9" x2="152.1" y2="487.2" stroke="#7d8084" stroke-width="0.45"/>
<line x1="145.5" y1="491.6" x2="151.1" y2="490.9" stroke="#7d8084" stroke-width="0.45"/>
<line x1="144.5" y1="495.3" x2="150.1" y2="494.6" stroke="#7d8084" stroke-width="0.45"/>
<line x1="143.6" y1="498.9" x2="149.2" y2="498.2" stroke="#7d8084" stroke-width="0.45"/>
<line x1="142.6" y1="502.6" x2="148.2" y2="501.9" stroke="#7d8084" stroke-width="0.45"/>
<line x1="169.3" y1="442.7" x2="153.6" y2="503.1" stroke="#c9ccce" stroke-width="1.8"/>
<line x1="165.8" y1="462.8" x2="164.9" y2="508.4" stroke="#d2d4d6" stroke-width="1.2"/>
<circle cx="170.2" cy="443.9" r="2" fill="#bdb9a8"/><circle cx="46.1" cy="447.1" r="1.8" fill="#bdb9a8"/><circle cx="53.7" cy="495.3" r="1.8" fill="#c2bfae"/><circle cx="155.3" cy="500.5" r="1.8" fill="#c2bfae"/>
</g></g></svg>
<svg style="left:208.9px;top:413.2px" width="119.9" height="119.4" viewBox="208.9 413.2 119.9 119.4">
<defs><linearGradient id="g2" x1="0" y1="0" x2="0" y2="1"><stop offset="0" stop-color="#a3c0e2"/><stop offset="0.6" stop-color="#c4d6ea"/><stop offset="1" stop-color="#e3e9ef"/></linearGradient><linearGradient id="g3" x1="0" y1="0" x2="0" y2="1"><stop offset="0" stop-color="#c4b3a2"/><stop offset="1" stop-color="#d3c6b7"/></linearGradient><clipPath id="c2"><rect x="208.9" y="413.2" width="119.9" height="119.4"/></clipPath><filter id="b2"><feGaussianBlur stdDeviation="0.35"/></filter><filter id="b3"><feGaussianBlur stdDeviation="1.6"/></filter></defs>
<g clip-path="url(#c2)"><rect x="208.9" y="413.2" width="119.9" height="67.5" fill="url(#g2)"/>
<g filter="url(#b3)" fill="#fff" opacity="0.85">
<ellipse cx="226.8" cy="419.9" rx="17.5" ry="5.6"/>
<ellipse cx="256.6" cy="422.5" rx="15.8" ry="6.7"/>
<ellipse cx="244.3" cy="429.5" rx="12.3" ry="3.9"/>
<ellipse cx="277.6" cy="427.4" rx="6.1" ry="3.2"/>
<ellipse cx="320.6" cy="428.7" rx="9.6" ry="7.9"/>
<ellipse cx="325.8" cy="450.6" rx="6.1" ry="10.5"/>
<ellipse cx="302.2" cy="437.4" rx="6.1" ry="2.8"/>
<ellipse cx="212.8" cy="415.5" rx="7.0" ry="3.9"/>
</g>
<rect x="208.9" y="480.4" width="119.9" height="52.2" fill="url(#g3)"/>
<g filter="url(#b2)">
<polygon points="207.5,430.1 248.7,438.6 248.7,482.5 207.5,486.0" fill="#9ea7b1"/>
<polygon points="207.5,483.5 248.7,481.4 248.7,483.2 207.5,486.7" fill="#7d7a76"/>
<polygon points="318.8,463.7 330.2,462.8 330.2,480.4 318.8,480.4" fill="#e3e4e4"/>
<polygon points="231.2,511.0 268.9,507.5 312.7,506.6 329.3,509.3 329.3,514.5 295.2,522.1 242.6,517.5" fill="#7d746b" opacity="0.55"/>
<ellipse cx="235.9" cy="442.2" rx="10.9" ry="3.9" fill="#17181a"/>
<ellipse cx="261.0" cy="437.9" rx="14.4" ry="5.3" fill="#17181a"/>
<ellipse cx="288.1" cy="442.7" rx="12.6" ry="4.2" fill="#17181a"/>
<ellipse cx="310.9" cy="446.7" rx="9.8" ry="3.9" fill="#17181a"/>
<polygon points="218.9,452.7 261.9,446.7 322.8,459.0 304.8,489.5 275.9,493.0 263.6,493.0 231.2,489.5" fill="#1b1b1d"/>
<polygon points="215.9,448.8 260.1,440.6 325.3,454.6 324.6,459.7 261.9,447.4 216.3,453.5" fill="#eceef0"/>
<polygon points="260.1,440.6 325.3,454.6 324.6,456.9 260.1,443.2" fill="#cfd3d8"/>
<line x1="217.5" y1="453.2" x2="230.0" y2="479.5" stroke="#f1f2f3" stroke-width="1.6" stroke-linecap="round"/>
<line x1="236.6" y1="452.7" x2="229.6" y2="481.2" stroke="#f1f2f3" stroke-width="2.2" stroke-linecap="round"/>
<line x1="237.0" y1="452.7" x2="274.5" y2="486.5" stroke="#f1f2f3" stroke-width="2.6" stroke-linecap="round"/>
<line x1="261.0" y1="447.9" x2="275.9" y2="486.5" stroke="#f1f2f3" stroke-width="2.6" stroke-linecap="round"/>
<line x1="298.1" y1="457.9" x2="276.2" y2="486.5" stroke="#f1f2f3" stroke-width="2.6" stroke-linecap="round"/>
<line x1="298.1" y1="457.9" x2="311.3" y2="489.5" stroke="#f1f2f3" stroke-width="2.0" stroke-linecap="round"/>
<line x1="322.7" y1="459.7" x2="311.6" y2="487.4" stroke="#f1f2f3" stroke-width="1.4" stroke-linecap="round"/>
<line x1="227.2" y1="491.2" x2="272.4" y2="496.5" stroke="#f1f2f3" stroke-width="3.4" stroke-linecap="round"/>
<line x1="228.9" y1="490.0" x2="221.9" y2="511.6" stroke="#f1f2f3" stroke-width="3.6" stroke-linecap="round"/>
<line x1="271.0" y1="488.8" x2="270.6" y2="521.5" stroke="#f1f2f3" stroke-width="5.6" stroke-linecap="round"/>
<line x1="310.9" y1="489.5" x2="316.5" y2="511.9" stroke="#f1f2f3" stroke-width="2.8" stroke-linecap="round"/>
<line x1="267.1" y1="522.1" x2="275.9" y2="520.7" stroke="#f1f2f3" stroke-width="1.6" stroke-linecap="round"/>
<line x1="220.1" y1="512.3" x2="225.1" y2="511.2" stroke="#f1f2f3" stroke-width="1.4" stroke-linecap="round"/>
<line x1="275.9" y1="499.3" x2="293.4" y2="502.4" stroke="#eef0f1" stroke-width="8.0" stroke-linecap="round"/>
<line x1="299.5" y1="494.4" x2="317.1" y2="497.5" stroke="#eef0f1" stroke-width="7.0" stroke-linecap="round"/>
<ellipse cx="293.0" cy="502.4" rx="2.6" ry="4" fill="#d9dbdd"/><ellipse cx="293.4" cy="502.4" rx="1.3" ry="2.4" fill="#4a4a4c"/>
<ellipse cx="317.2" cy="497.5" rx="2.3" ry="3.5" fill="#d9dbdd"/><ellipse cx="317.6" cy="497.5" rx="1.1" ry="2.1" fill="#4a4a4c"/>
</g></g></svg>
<div class="p" style="left:378.5px;top:63.8px;width:545.0px;height:36.2px;"></div>
<span class="t" style="left:573.90px;top:68.81px;font-size:18.6px;line-height:24.18px;color:#1c566d;letter-spacing:-0.424px;-webkit-text-stroke:0.75px #1c566d;">Pump Performance</span>
<div class="p" style="left:378.5px;top:107.6px;width:120.6px;height:100.1px;"></div>
<div class="p" style="left:506.6px;top:107.6px;width:120.4px;height:100.1px;"></div>
<div class="p" style="left:634.5px;top:107.6px;width:84.4px;height:100.1px;"></div>
<div class="p" style="left:726.5px;top:107.6px;width:96.5px;height:100.1px;"></div>
<div class="p" style="left:830.5px;top:107.6px;width:93.0px;height:100.1px;"></div>
<span class="t" style="left:406.10px;top:149.60px;font-size:12px;line-height:15.6px;color:#222;letter-spacing:-0.696px;">Average Flow</span>
<span class="t" style="left:415.90px;top:167.45px;font-size:15px;line-height:19.5px;color:#222;font-weight:700;letter-spacing:-0.372px;">621 m³</span>
<span class="t" style="left:542.20px;top:149.60px;font-size:12px;line-height:15.6px;color:#222;letter-spacing:-0.533px;">Total Flow</span>
<span class="t" style="left:525.10px;top:167.45px;font-size:15px;line-height:19.5px;color:#222;font-weight:700;letter-spacing:-0.459px;">3,112,363 m³</span>
<span class="t" style="left:654.40px;top:149.60px;font-size:12px;line-height:15.6px;color:#222;letter-spacing:-0.761px;">Low Flow</span>
<span class="t" style="left:672.53px;top:167.45px;font-size:15px;line-height:19.5px;color:#222;font-weight:700;">1</span>
<span class="t" style="left:741.00px;top:149.60px;font-size:12px;line-height:15.6px;color:#222;letter-spacing:-0.725px;">High Pressure</span>
<span class="t" style="left:770.58px;top:167.45px;font-size:15px;line-height:19.5px;color:#222;font-weight:700;">0</span>
<span class="t" style="left:844.30px;top:149.60px;font-size:12px;line-height:15.6px;color:#222;letter-spacing:-0.706px;">Low Pressure</span>
<span class="t" style="left:872.83px;top:167.45px;font-size:15px;line-height:19.5px;color:#222;font-weight:700;">1</span>
<svg style="left:428px;top:125px" width="22" height="22" viewBox="428 125 22 22"><rect x="430.05" y="127.95" width="16.9" height="16.6" rx="1.4" fill="none" stroke="#111" stroke-width="2.1"/><path d="M433.4 132.2 H443.7 M433.4 136.4 H443.7 M433.4 140.7 H440.4" stroke="#111" stroke-width="1.8" fill="none"/></svg>
<svg style="left:556px;top:123px" width="22" height="24" viewBox="556 123 22 24"><rect x="558.05" y="128.1" width="16.9" height="16.5" rx="1.4" fill="none" stroke="#111" stroke-width="2.1"/><circle cx="566.3" cy="127.3" r="1.7" fill="#fff" stroke="#111" stroke-width="1.6"/><path d="M561.4 132.2 H571.6 M561.4 136.4 H571.6 M561.4 140.7 H568.4" stroke="#111" stroke-width="1.8" fill="none"/></svg>
<svg style="left:664px;top:125px" width="25" height="22" viewBox="664 125 25 22"><path d="M676.5 127.2 L687.2 145.3 H665.8 Z" fill="#d7442d" stroke="#d7442d" stroke-width="0.8" stroke-linejoin="round"/><rect x="675.5" y="134" width="2" height="4.6" fill="#fff"/><rect x="675.5" y="140.6" width="2" height="2.2" fill="#fff"/></svg>
<svg style="left:763px;top:125px" width="23" height="23" viewBox="763 125 23 23"><circle cx="774.5" cy="136.3" r="9.3" fill="none" stroke="#2a9679" stroke-width="1.9"/><path d="M769 137.2 L772.2 140.1 L779.4 133" fill="none" stroke="#2a9679" stroke-width="1.9"/></svg>
<svg style="left:865px;top:125px" width="23" height="23" viewBox="865 125 23 23"><circle cx="876.4" cy="136.3" r="9.5" fill="none" stroke="#cf1322" stroke-width="2"/><path d="M875.6 135 L880.2 139.9" stroke="#d90f1e" stroke-width="2.7" stroke-linecap="round" fill="none"/><circle cx="874.7" cy="134.2" r="3.2" fill="#e0101e"/><path d="M874.9 134.3 L870.4 131.8 L873.2 129.6 Z" fill="#fff"/></svg>

<div class="p" style="left:378.5px;top:220px;width:545.0px;height:28px;"></div>
<span class="t" style="left:586.50px;top:222.50px;font-size:14px;line-height:18.2px;color:#1c566d;letter-spacing:-0.318px;-webkit-text-stroke:0.42px #1c566d;">Low Flow/Throughput</span>
<div class="p" style="left:378.5px;top:256px;width:545.0px;height:96.2px;"></div>
<span class="t" style="left:390.70px;top:264.70px;font-size:8px;line-height:10.4px;color:#111;letter-spacing:-0.417px;-webkit-text-stroke:0.25px #111;">Asset ID</span>
<span class="t" style="left:465.10px;top:264.70px;font-size:8px;line-height:10.4px;color:#111;letter-spacing:-0.517px;-webkit-text-stroke:0.25px #111;">Times</span>
<span class="t" style="left:540.10px;top:264.70px;font-size:8px;line-height:10.4px;color:#111;letter-spacing:-0.381px;-webkit-text-stroke:0.25px #111;">Org</span>
<span class="t" style="left:615.10px;top:264.70px;font-size:8px;line-height:10.4px;color:#111;letter-spacing:-0.975px;-webkit-text-stroke:0.25px #111;">Geo</span>
<span class="t" style="left:690.10px;top:264.70px;font-size:8px;line-height:10.4px;color:#111;letter-spacing:-0.583px;-webkit-text-stroke:0.25px #111;">Asset</span>
<span class="t" style="left:764.50px;top:264.70px;font-size:8px;line-height:10.4px;color:#111;letter-spacing:-0.398px;-webkit-text-stroke:0.25px #111;">Status</span>
<span class="t" style="left:839.50px;top:264.70px;font-size:8px;line-height:10.4px;color:#111;letter-spacing:-0.312px;-webkit-text-stroke:0.25px #111;">Throughput</span>
<span class="t" style="left:390.70px;top:286.26px;font-size:7.9px;line-height:10.27px;color:#b9202e;letter-spacing:-0.351px;">16387</span>
<span class="t" style="left:465.70px;top:286.26px;font-size:7.9px;line-height:10.27px;color:#b9202e;letter-spacing:-0.249px;">06/11/2025 16:19:12</span>
<span class="t" style="left:542.00px;top:286.26px;font-size:7.9px;line-height:10.27px;color:#b9202e;letter-spacing:-0.460px;">Industry Dashboard...</span>
<span class="t" style="left:617.00px;top:286.26px;font-size:7.9px;line-height:10.27px;color:#b9202e;letter-spacing:-0.439px;">Lisbon, Portugal</span>
<span class="t" style="left:692.00px;top:286.26px;font-size:7.9px;line-height:10.27px;color:#b9202e;letter-spacing:-0.564px;">PUMP 001</span>
<span class="t" style="left:767.60px;top:286.26px;font-size:7.9px;line-height:10.27px;color:#b9202e;letter-spacing:-0.484px;">Disconnected</span>
<span class="t" style="left:842.60px;top:286.26px;font-size:7.9px;line-height:10.27px;color:#b9202e;letter-spacing:-0.379px;">0 m³/h</span>
<div class="b" style="left:379px;top:282.6px;width:544px;height:1px;background:#e9ebef"></div>
<div class="b" style="left:379px;top:299.3px;width:544px;height:1px;background:#7a7a7a"></div>
<div class="p" style="left:378.5px;top:368.2px;width:268.7px;height:28.1px;"></div>
<span class="t" style="left:472.40px;top:370.70px;font-size:14px;line-height:18.2px;color:#1c566d;letter-spacing:-0.631px;-webkit-text-stroke:0.42px #1c566d;">High Pressure</span>
<div class="p" style="left:654.6px;top:368.2px;width:268.9px;height:28.1px;"></div>
<span class="t" style="left:749.80px;top:370.70px;font-size:14px;line-height:18.2px;color:#1c566d;letter-spacing:-0.683px;-webkit-text-stroke:0.42px #1c566d;">Low Pressure</span>
<div class="p" style="left:378.5px;top:403.6px;width:268.4px;height:143.7px;"></div>
<div class="b" style="left:404.5px;top:424.0px;width:215px;height:1px;background:#f7f7f9"></div>
<div class="b" style="left:404.5px;top:452.7px;width:215px;height:1px;background:#f7f7f9"></div>
<div class="b" style="left:404.5px;top:465.1px;width:215px;height:1px;background:#f7f7f9"></div>
<div class="b" style="left:404.5px;top:477.8px;width:215px;height:1px;background:#f7f7f9"></div>
<div class="b" style="left:404.5px;top:490.5px;width:215px;height:1px;background:#f7f7f9"></div>
<div class="b" style="left:404.5px;top:502.9px;width:215px;height:1px;background:#f7f7f9"></div>
<div class="b" style="left:404.5px;top:515.5px;width:215px;height:1px;background:#f7f7f9"></div>
<div class="b" style="left:404.5px;top:528.0px;width:215px;height:1px;background:#f7f7f9"></div>
<div class="b" style="left:404.5px;top:424.5px;width:1px;height:104px;background:#f8f8fa"></div><div class="b" style="left:619px;top:424.5px;width:1px;height:104px;background:#f7f7f9"></div>
<span class="t" style="left:435.00px;top:470.98px;font-size:8.8px;line-height:11.44px;color:#111;letter-spacing:-0.415px;-webkit-text-stroke:0.12px #111;">At present there is no relevant data available</span>
<div class="p" style="left:654.6px;top:403.6px;width:268.9px;height:143.7px;"></div>
<span class="t" style="left:666.80px;top:412.50px;font-size:8px;line-height:10.4px;color:#111;letter-spacing:-0.529px;-webkit-text-stroke:0.25px #111;">Asset ID</span>
<span class="t" style="left:715.00px;top:412.50px;font-size:8px;line-height:10.4px;color:#111;letter-spacing:-0.426px;-webkit-text-stroke:0.25px #111;">Data Timest...</span>
<span class="t" style="left:768.70px;top:412.50px;font-size:8px;line-height:10.4px;color:#111;letter-spacing:-0.355px;-webkit-text-stroke:0.25px #111;">Organization</span>
<span class="t" style="left:817.80px;top:412.50px;font-size:8px;line-height:10.4px;color:#111;letter-spacing:-0.625px;-webkit-text-stroke:0.25px #111;">Asset name</span>
<span class="t" style="left:866.20px;top:412.50px;font-size:8px;line-height:10.4px;color:#111;letter-spacing:-1.252px;-webkit-text-stroke:0.25px #111;">PRESSURE</span>
<span class="t" style="left:666.80px;top:433.76px;font-size:7.9px;line-height:10.27px;color:#b9202e;letter-spacing:-0.351px;">16387</span>
<span class="t" style="left:717.00px;top:433.76px;font-size:7.9px;line-height:10.27px;color:#b9202e;letter-spacing:-0.176px;">06/11/202...</span>
<span class="t" style="left:767.50px;top:433.76px;font-size:7.9px;line-height:10.27px;color:#b9202e;letter-spacing:-0.388px;">Industry Da...</span>
<span class="t" style="left:817.80px;top:433.76px;font-size:7.9px;line-height:10.27px;color:#b9202e;letter-spacing:-0.564px;">PUMP 001</span>
<span class="t" style="left:868.00px;top:433.76px;font-size:7.9px;line-height:10.27px;color:#b9202e;letter-spacing:-0.515px;">0 Bar</span>
<div class="b" style="left:655px;top:430.4px;width:268px;height:1px;background:#e9ebef"></div>
<div class="b" style="left:655px;top:446.6px;width:268px;height:1px;background:#7a7a7a"></div>
<div class="b" style="left:19.3px;top:560px;width:907.7px;height:199.3px;border:1px solid #3c86c8;border-radius:4px;box-shadow:none;background:#fff;"></div>
<div class="b" style="left:19.3px;top:560px;width:907.7px;height:23.8px;background:#3a89cf;border-radius:4px 4px 0 0;"></div>
<span class="t" style="left:29.90px;top:566.56px;font-size:7.6px;line-height:9.88px;color:#fff;font-weight:700;letter-spacing:-0.556px;">Throughput Performance</span>
<svg style="left:904.5px;top:567px" width="9" height="10" viewBox="0 0 9 10"><path d="M4.5 0.6 V6.2 M2.2 4 L4.5 6.4 L6.8 4 M1.4 8.6 H7.6" fill="none" stroke="#fff" stroke-width="1"/></svg>
<svg style="left:912.6px;top:587.6px" width="9" height="7" viewBox="0 0 9 7"><path d="M0 0.8 H8.4 M0 3.3 H8.4 M0 5.8 H8.4" fill="none" stroke="#444" stroke-width="1"/></svg>
<div class="b" style="left:400.9px;top:595.9000000000001px;width:4.6px;height:4.6px;border-radius:50%;background:#5bb9f0"></div>
<span class="t" style="left:407.40px;top:594.73px;font-size:5.8px;line-height:7.54px;color:#333;letter-spacing:0.039px;">Idle / Off</span>
<div class="b" style="left:434.0px;top:595.9000000000001px;width:4.6px;height:4.6px;border-radius:50%;background:#4fb3ee"></div>
<span class="t" style="left:440.80px;top:594.73px;font-size:5.8px;line-height:7.54px;color:#333;letter-spacing:-0.114px;">Low</span>
<div class="b" style="left:455.3px;top:595.9000000000001px;width:4.6px;height:4.6px;border-radius:50%;background:#2e86de"></div>
<span class="t" style="left:461.90px;top:594.73px;font-size:5.8px;line-height:7.54px;color:#333;letter-spacing:0.035px;">Normal</span>
<div class="b" style="left:485.3px;top:595.9000000000001px;width:4.6px;height:4.6px;border-radius:50%;background:#0b5f8f"></div>
<span class="t" style="left:491.80px;top:594.73px;font-size:5.8px;line-height:7.54px;color:#333;letter-spacing:0.016px;">High</span>
<div class="b" style="left:508.09999999999997px;top:595.9000000000001px;width:4.6px;height:4.6px;border-radius:50%;background:#6e2357"></div>
<span class="t" style="left:514.60px;top:594.73px;font-size:5.8px;line-height:7.54px;color:#333;letter-spacing:0.037px;">Value Error</span>
<div class="b" style="left:65.80px;top:611.8px;width:45.53px;height:59.40000000000009px;background:#7a2d62"></div>
<span class="t" style="left:83.56px;top:639.00px;font-size:6px;line-height:7.8px;color:#fff;font-weight:700;">550</span>
<div class="b" style="left:112.33px;top:611.8px;width:45.53px;height:59.40000000000009px;background:#55bef7"></div>
<span class="t" style="left:133.42px;top:639.00px;font-size:6px;line-height:7.8px;color:#2b3a4a;font-weight:700;">1</span>
<div class="b" style="left:158.86px;top:611.8px;width:45.53px;height:59.40000000000009px;background:#7a2d62"></div>
<span class="t" style="left:176.61px;top:639.00px;font-size:6px;line-height:7.8px;color:#fff;font-weight:700;">550</span>
<div class="b" style="left:205.38px;top:611.8px;width:45.53px;height:59.40000000000009px;background:#7a2d62"></div>
<span class="t" style="left:223.14px;top:639.00px;font-size:6px;line-height:7.8px;color:#fff;font-weight:700;">834</span>
<div class="b" style="left:251.91px;top:611.8px;width:45.53px;height:59.40000000000009px;background:#7a2d62"></div>
<span class="t" style="left:267.17px;top:639.00px;font-size:6px;line-height:7.8px;color:#fff;font-weight:700;">1,081</span>
<div class="b" style="left:298.44px;top:611.8px;width:45.53px;height:59.40000000000009px;background:#7a2d62"></div>
<span class="t" style="left:313.69px;top:639.00px;font-size:6px;line-height:7.8px;color:#fff;font-weight:700;">1,020</span>
<div class="b" style="left:344.97px;top:611.8px;width:45.53px;height:59.40000000000009px;background:#7a2d62"></div>
<span class="t" style="left:362.72px;top:639.00px;font-size:6px;line-height:7.8px;color:#fff;font-weight:700;">207</span>
<div class="b" style="left:391.49px;top:611.8px;width:45.53px;height:59.40000000000009px;background:#55bef7"></div>
<span class="t" style="left:412.59px;top:639.00px;font-size:6px;line-height:7.8px;color:#2b3a4a;font-weight:700;">3</span>
<div class="b" style="left:438.02px;top:611.8px;width:45.53px;height:59.40000000000009px;background:#7a2d62"></div>
<span class="t" style="left:455.78px;top:639.00px;font-size:6px;line-height:7.8px;color:#fff;font-weight:700;">280</span>
<div class="b" style="left:484.55px;top:611.8px;width:45.53px;height:59.40000000000009px;background:#7a2d62"></div>
<span class="t" style="left:502.31px;top:639.00px;font-size:6px;line-height:7.8px;color:#fff;font-weight:700;">298</span>
<div class="b" style="left:531.08px;top:611.8px;width:45.53px;height:59.40000000000009px;background:#7a2d62"></div>
<span class="t" style="left:548.83px;top:639.00px;font-size:6px;line-height:7.8px;color:#fff;font-weight:700;">954</span>
<div class="b" style="left:577.61px;top:611.8px;width:45.53px;height:59.40000000000009px;background:#7a2d62"></div>
<span class="t" style="left:595.36px;top:639.00px;font-size:6px;line-height:7.8px;color:#fff;font-weight:700;">762</span>
<div class="b" style="left:624.13px;top:611.8px;width:45.53px;height:59.40000000000009px;background:#7a2d62"></div>
<span class="t" style="left:639.39px;top:639.00px;font-size:6px;line-height:7.8px;color:#fff;font-weight:700;">1,246</span>
<div class="b" style="left:670.66px;top:611.8px;width:45.53px;height:59.40000000000009px;background:#7a2d62"></div>
<span class="t" style="left:685.92px;top:639.00px;font-size:6px;line-height:7.8px;color:#fff;font-weight:700;">1,079</span>
<div class="b" style="left:717.19px;top:611.8px;width:45.53px;height:59.40000000000009px;background:#7a2d62"></div>
<span class="t" style="left:734.94px;top:639.00px;font-size:6px;line-height:7.8px;color:#fff;font-weight:700;">190</span>
<div class="b" style="left:763.72px;top:611.8px;width:45.53px;height:59.40000000000009px;background:#7a2d62"></div>
<span class="t" style="left:781.47px;top:639.00px;font-size:6px;line-height:7.8px;color:#fff;font-weight:700;">135</span>
<div class="b" style="left:810.24px;top:611.8px;width:45.53px;height:59.40000000000009px;background:#7a2d62"></div>
<span class="t" style="left:828.00px;top:639.00px;font-size:6px;line-height:7.8px;color:#fff;font-weight:700;">585</span>
<div class="b" style="left:856.77px;top:611.8px;width:45.53px;height:59.40000000000009px;background:#7a2d62"></div>
<span class="t" style="left:874.53px;top:639.00px;font-size:6px;line-height:7.8px;color:#fff;font-weight:700;">844</span>
<div class="b" style="left:65.80px;top:672px;width:45.53px;height:59.799999999999955px;background:#7a2d62"></div>
<span class="t" style="left:83.56px;top:699.40px;font-size:6px;line-height:7.8px;color:#fff;font-weight:700;">853</span>
<div class="b" style="left:112.33px;top:672px;width:45.53px;height:59.799999999999955px;background:#7a2d62"></div>
<span class="t" style="left:130.08px;top:699.40px;font-size:6px;line-height:7.8px;color:#fff;font-weight:700;">579</span>
<div class="b" style="left:158.86px;top:672px;width:45.53px;height:59.799999999999955px;background:#55bef7"></div>
<span class="t" style="left:179.95px;top:699.40px;font-size:6px;line-height:7.8px;color:#2b3a4a;font-weight:700;">3</span>
<div class="b" style="left:205.38px;top:672px;width:45.53px;height:59.799999999999955px;background:#0869a9"></div>
<span class="t" style="left:223.14px;top:699.40px;font-size:6px;line-height:7.8px;color:#fff;font-weight:700;">107</span>
<div class="b" style="left:251.91px;top:672px;width:45.53px;height:59.799999999999955px;background:#7a2d62"></div>
<span class="t" style="left:269.67px;top:699.40px;font-size:6px;line-height:7.8px;color:#fff;font-weight:700;">337</span>
<div class="b" style="left:298.44px;top:672px;width:45.53px;height:59.799999999999955px;background:#7a2d62"></div>
<span class="t" style="left:316.19px;top:699.40px;font-size:6px;line-height:7.8px;color:#fff;font-weight:700;">926</span>
<div class="b" style="left:344.97px;top:672px;width:45.53px;height:59.799999999999955px;background:#7a2d62"></div>
<span class="t" style="left:362.72px;top:699.40px;font-size:6px;line-height:7.8px;color:#fff;font-weight:700;">557</span>
<div class="b" style="left:391.49px;top:672px;width:45.53px;height:59.799999999999955px;background:#7a2d62"></div>
<span class="t" style="left:406.75px;top:699.40px;font-size:6px;line-height:7.8px;color:#fff;font-weight:700;">1,250</span>
<div class="b" style="left:438.02px;top:672px;width:45.53px;height:59.799999999999955px;background:#7a2d62"></div>
<span class="t" style="left:453.28px;top:699.40px;font-size:6px;line-height:7.8px;color:#fff;font-weight:700;">1,209</span>
<div class="b" style="left:484.55px;top:672px;width:45.53px;height:59.799999999999955px;background:#7a2d62"></div>
<span class="t" style="left:502.31px;top:699.40px;font-size:6px;line-height:7.8px;color:#fff;font-weight:700;">408</span>
<div class="b" style="left:531.08px;top:672px;width:45.53px;height:59.799999999999955px;background:#008ffb"></div>
<span class="t" style="left:550.50px;top:699.40px;font-size:6px;line-height:7.8px;color:#2b3a4a;font-weight:700;">43</span>
<div class="b" style="left:577.61px;top:672px;width:45.53px;height:59.799999999999955px;background:#7a2d62"></div>
<span class="t" style="left:595.36px;top:699.40px;font-size:6px;line-height:7.8px;color:#fff;font-weight:700;">803</span>
<div class="b" style="left:624.13px;top:672px;width:45.53px;height:59.799999999999955px;background:#7a2d62"></div>
<span class="t" style="left:641.89px;top:699.40px;font-size:6px;line-height:7.8px;color:#fff;font-weight:700;">856</span>
<div class="b" style="left:670.66px;top:672px;width:45.53px;height:59.799999999999955px;background:#7a2d62"></div>
<span class="t" style="left:685.92px;top:699.40px;font-size:6px;line-height:7.8px;color:#fff;font-weight:700;">1,240</span>
<div class="b" style="left:717.19px;top:672px;width:45.53px;height:59.799999999999955px;background:#7a2d62"></div>
<span class="t" style="left:732.61px;top:699.40px;font-size:6px;line-height:7.8px;color:#fff;font-weight:700;">1,011</span>
<div class="b" style="left:763.72px;top:672px;width:45.53px;height:59.799999999999955px;background:#7a2d62"></div>
<span class="t" style="left:778.97px;top:699.40px;font-size:6px;line-height:7.8px;color:#fff;font-weight:700;">1,045</span>
<div class="b" style="left:810.24px;top:672px;width:45.53px;height:59.799999999999955px;background:#7a2d62"></div>
<span class="t" style="left:828.00px;top:699.40px;font-size:6px;line-height:7.8px;color:#fff;font-weight:700;">504</span>
<div class="b" style="left:856.77px;top:672px;width:45.53px;height:59.799999999999955px;background:#55bef7"></div>
<span class="t" style="left:877.86px;top:699.40px;font-size:6px;line-height:7.8px;color:#2b3a4a;font-weight:700;">0</span>
<span class="t" style="left:77.16px;top:739.10px;font-size:6px;line-height:7.8px;color:#333;letter-spacing:-0.070px;">20/10/25</span>
<span class="t" style="left:123.69px;top:739.10px;font-size:6px;line-height:7.8px;color:#333;letter-spacing:-0.070px;">21/10/25</span>
<span class="t" style="left:170.22px;top:739.10px;font-size:6px;line-height:7.8px;color:#333;letter-spacing:-0.070px;">22/10/25</span>
<span class="t" style="left:216.75px;top:739.10px;font-size:6px;line-height:7.8px;color:#333;letter-spacing:-0.070px;">23/10/25</span>
<span class="t" style="left:263.28px;top:739.10px;font-size:6px;line-height:7.8px;color:#333;letter-spacing:-0.070px;">24/10/25</span>
<span class="t" style="left:309.80px;top:739.10px;font-size:6px;line-height:7.8px;color:#333;letter-spacing:-0.070px;">25/10/25</span>
<span class="t" style="left:356.33px;top:739.10px;font-size:6px;line-height:7.8px;color:#333;letter-spacing:-0.070px;">26/10/25</span>
<span class="t" style="left:402.86px;top:739.10px;font-size:6px;line-height:7.8px;color:#333;letter-spacing:-0.070px;">27/10/25</span>
<span class="t" style="left:449.39px;top:739.10px;font-size:6px;line-height:7.8px;color:#333;letter-spacing:-0.070px;">28/10/25</span>
<span class="t" style="left:495.91px;top:739.10px;font-size:6px;line-height:7.8px;color:#333;letter-spacing:-0.070px;">29/10/25</span>
<span class="t" style="left:542.44px;top:739.10px;font-size:6px;line-height:7.8px;color:#333;letter-spacing:-0.070px;">30/10/25</span>
<span class="t" style="left:588.97px;top:739.10px;font-size:6px;line-height:7.8px;color:#333;letter-spacing:-0.070px;">31/10/25</span>
<span class="t" style="left:635.50px;top:739.10px;font-size:6px;line-height:7.8px;color:#333;letter-spacing:-0.015px;">01/11/25</span>
<span class="t" style="left:682.02px;top:739.10px;font-size:6px;line-height:7.8px;color:#333;letter-spacing:-0.015px;">02/11/25</span>
<span class="t" style="left:728.55px;top:739.10px;font-size:6px;line-height:7.8px;color:#333;letter-spacing:-0.015px;">03/11/25</span>
<span class="t" style="left:775.08px;top:739.10px;font-size:6px;line-height:7.8px;color:#333;letter-spacing:-0.015px;">04/11/25</span>
<span class="t" style="left:821.61px;top:739.10px;font-size:6px;line-height:7.8px;color:#333;letter-spacing:-0.015px;">05/11/25</span>
<span class="t" style="left:868.14px;top:739.10px;font-size:6px;line-height:7.8px;color:#333;letter-spacing:-0.015px;">06/11/25</span>
<span class="t" style="left:34.80px;top:639.10px;font-size:6px;line-height:7.8px;color:#333;letter-spacing:-0.388px;">PUMP 002</span>
<span class="t" style="left:34.80px;top:699.10px;font-size:6px;line-height:7.8px;color:#333;letter-spacing:-0.388px;">PUMP 001</span>
<span class="t" style="left:25.1px;top:671px;font-size:6px;line-height:8px;color:#333;transform:translate(-50%,-50%) rotate(-90deg);letter-spacing:0px">Average Throughput</span>
</div>
</body></html>
